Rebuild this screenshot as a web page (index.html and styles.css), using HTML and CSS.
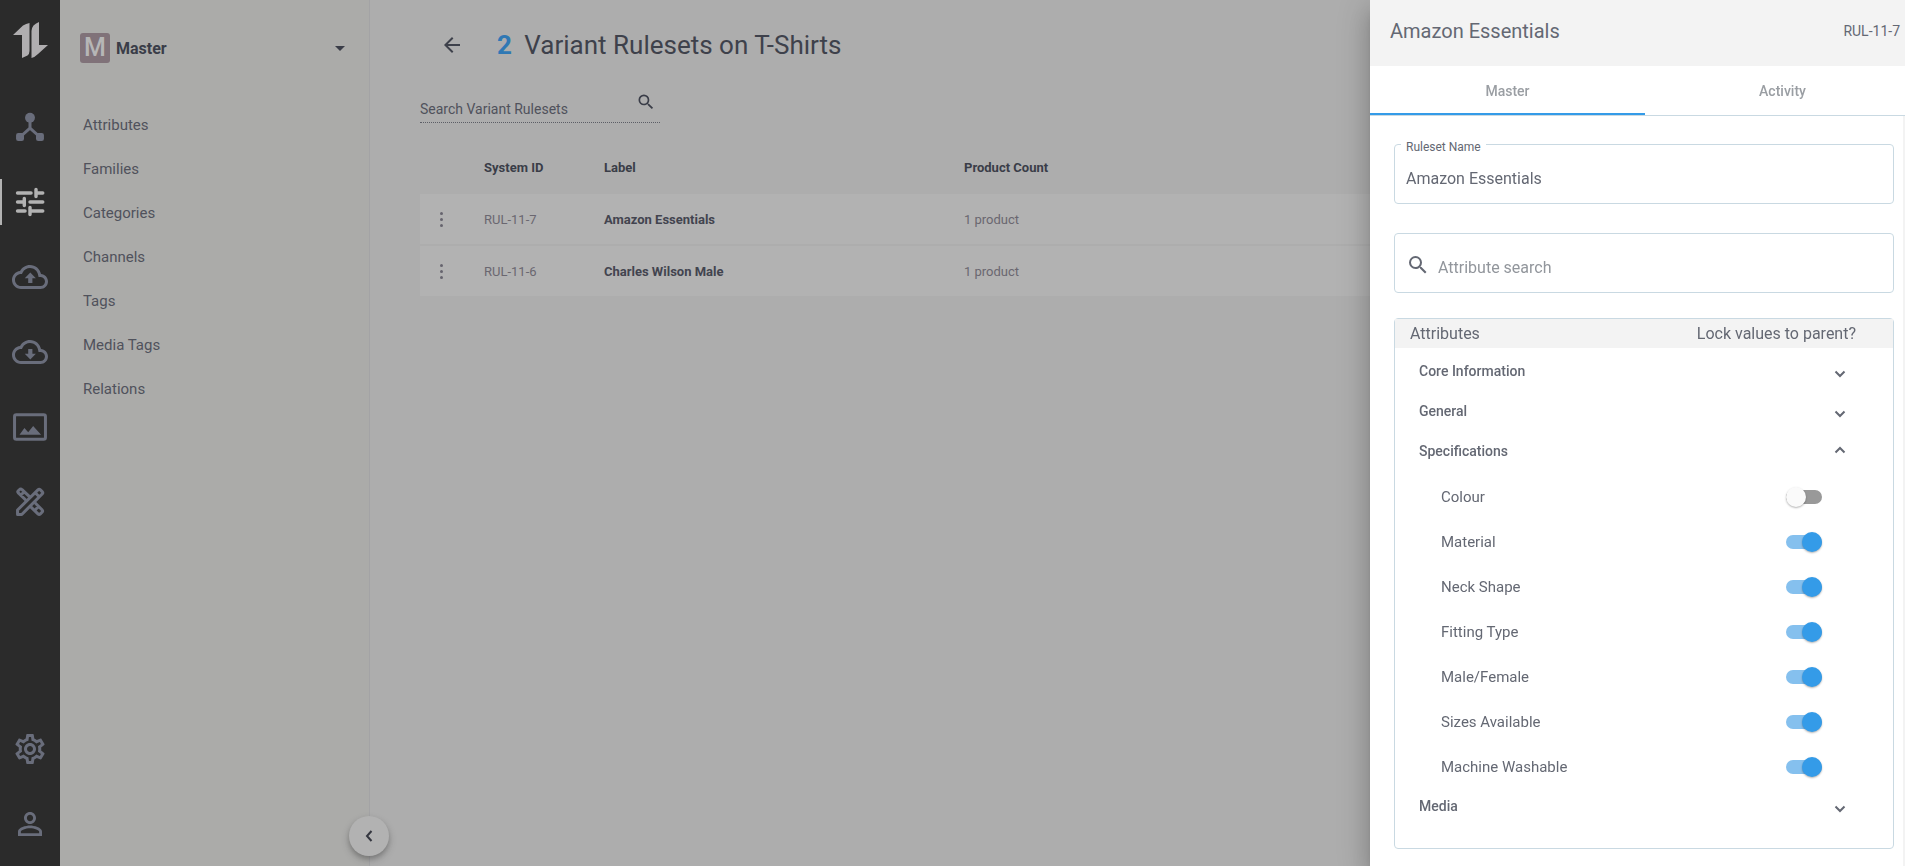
FILE: index.html
```html
<!DOCTYPE html>
<html lang="en">
<head>
    <meta charset="UTF-8">
    <meta name="viewport" content="width=device-width, initial-scale=1.0">
    <title>Variant Rulesets</title>
    <link rel="stylesheet" href="styles.css">
</head>
<body>
    <div class="app">
        <nav class="rail" aria-label="Main">
            <a class="rail-logo" href="#" aria-label="Home">
                <svg width="36" height="38" viewBox="0 0 36 38">
                    <path d="M16.500 1v28q0 3-2 4.500L9 36V13H0L10 3.500Q13 1.500 16.500 1z"/>
                    <path d="M26 0v23h9L25 32q-3 3-6.500 4V9q0-3 2-5.500Q23 1 26 0z"/>
                </svg>
            </a>
            <a class="rail-item" href="#" aria-label="Hierarchy">
                <svg width="36" height="36" viewBox="0 0 24 24">
                    <circle cx="12" cy="5.800" r="3.300"/>
                    <rect x="2.700" y="16" width="5.300" height="5.300" rx="1.500"/>
                    <rect x="16" y="16" width="5.300" height="5.300" rx="1.500"/>
                    <path class="line" d="M12 8v5.200M12 12.700L5.600 18.500M12 12.700l6.400 5.800"/>
                </svg>
            </a>
            <a class="rail-item active" href="#" aria-label="Setup">
                <svg width="36" height="36" viewBox="0 0 24 24">
                    <path class="line round" d="M3.700 6h9M16 3.700v4.600M16 6h4.500M3.700 12h4M8.200 9.700v4.600M12 12h8.500M3.700 18h5M12 15.700v4.600M12 18h8.500"/>
                </svg>
            </a>
            <a class="rail-item" href="#" aria-label="Import">
                <svg width="36" height="36" viewBox="0 0 24 24">
                    <path d="M19.350 10.040C18.670 6.590 15.640 4 12 4 9.110 4 6.600 5.640 5.350 8.040 2.340 8.360 0 10.910 0 14c0 3.310 2.690 6 6 6h13c2.760 0 5-2.240 5-5 0-2.640-2.050-4.780-4.650-4.960zM19 18H6c-2.210 0-4-1.790-4-4 0-2.050 1.530-3.760 3.560-3.970l1.070-.110.500-.950C8.080 7.140 9.940 6 12 6c2.620 0 4.880 1.860 5.390 4.430l.300 1.500 1.530.110c1.560.100 2.780 1.410 2.780 2.960 0 1.650-1.350 3-3 3z"/>
                    <path d="M8.500 12.800h2.300V16h2.800v-3.200h2.300L12.200 9z"/>
                </svg>
            </a>
            <a class="rail-item" href="#" aria-label="Export">
                <svg width="36" height="36" viewBox="0 0 24 24">
                    <path d="M19.350 10.040C18.670 6.590 15.640 4 12 4 9.110 4 6.600 5.640 5.350 8.040 2.340 8.360 0 10.910 0 14c0 3.310 2.690 6 6 6h13c2.760 0 5-2.240 5-5 0-2.640-2.050-4.780-4.650-4.960zM19 18H6c-2.210 0-4-1.790-4-4 0-2.050 1.530-3.760 3.560-3.970l1.070-.110.500-.950C8.080 7.140 9.940 6 12 6c2.620 0 4.880 1.860 5.390 4.430l.300 1.500 1.530.110c1.560.100 2.780 1.410 2.780 2.960 0 1.650-1.350 3-3 3z"/>
                    <path d="M8.500 13.200h2.300V10h2.800v3.200h2.300L12.200 17z"/>
                </svg>
            </a>
            <a class="rail-item" href="#" aria-label="Media">
                <svg width="36" height="36" viewBox="0 0 24 24">
                    <rect class="line" x="1.700" y="3.800" width="20.600" height="16.400" rx="1.200"/>
                    <path d="M5 17.200l3.300-4.500 2.500 2.800 3.300-4.200 5.300 5.900z"/>
                </svg>
            </a>
            <a class="rail-item" href="#" aria-label="Tools">
                <svg width="36" height="36" viewBox="0 0 24 24">
                    <path class="thin" d="M9.500 11L4.200 5.900Q3.500 5.200 4.200 4.500l.700-.700q.900-.900 1.800 0L12 8.800M5.800 7.500l2.200-2.200M14.800 12l5.200 5.200q.800.800 0 1.600l-1.100 1.100q-.800.800-1.600 0L12 14.800M15.700 17l2.200-2.200"/>
                    <path class="thin" d="M3.700 20.300v-3L17.300 3.900q.800-.800 1.600 0l1.200 1.200q.800.800 0 1.600L6.500 20.300zM15.300 5.700l3 3"/>
                </svg>
            </a>
            <a class="rail-item rail-bottom" href="#" aria-label="Settings">
                <svg width="36" height="36" viewBox="0 0 24 24">
                    <path d="M19.430 12.980c.040-.320.070-.640.070-.980s-.030-.660-.070-.980l2.110-1.650c.190-.150.240-.420.120-.640l-2-3.460c-.090-.160-.260-.250-.440-.250-.060 0-.120.010-.170.030l-2.490 1c-.520-.400-1.080-.730-1.690-.980l-.380-2.650C14.460 2.180 14.250 2 14 2h-4c-.250 0-.460.180-.490.420l-.380 2.650c-.610.250-1.170.590-1.690.980l-2.490-1c-.060-.020-.120-.030-.180-.030-.170 0-.340.090-.430.250l-2 3.460c-.130.220-.070.490.120.640l2.110 1.650c-.040.320-.070.650-.070.980s.030.660.070.980l-2.110 1.650c-.190.150-.240.420-.120.640l2 3.460c.090.160.260.250.440.250.060 0 .120-.010.170-.030l2.490-1c.520.400 1.080.730 1.690.980l.380 2.650c.030.240.240.420.490.420h4c.250 0 .460-.180.490-.420l.380-2.650c.610-.250 1.170-.590 1.690-.980l2.490 1c.060.020.120.030.180.030.170 0 .340-.090.430-.250l2-3.460c.120-.220.070-.490-.120-.640l-2.110-1.650zm-1.980-1.710c.040.310.050.520.050.730s-.020.430-.050.730l-.140 1.130.890.700 1.080.840-.700 1.210-1.270-.510-1.040-.420-.900.680c-.430.320-.840.560-1.250.730l-1.060.430-.160 1.130-.200 1.350h-1.400l-.190-1.350-.160-1.130-1.060-.430c-.430-.180-.830-.410-1.230-.710l-.910-.700-1.060.430-1.270.510-.700-1.210 1.080-.840.890-.700-.140-1.130c-.030-.310-.050-.540-.050-.740s.020-.430.050-.730l.140-1.130-.890-.700-1.080-.840.700-1.210 1.270.510 1.040.420.900-.680c.430-.320.840-.560 1.250-.730l1.060-.430.160-1.130.200-1.350h1.390l.190 1.350.160 1.130 1.060.430c.430.180.830.410 1.230.710l.910.700 1.060-.430 1.270-.510.700 1.210-1.070.850-.890.700.140 1.130zM12 8c-2.210 0-4 1.790-4 4s1.790 4 4 4 4-1.790 4-4-1.790-4-4-4zm0 6c-1.100 0-2-.900-2-2s.900-2 2-2 2 .900 2 2-.900 2-2 2z"/>
                </svg>
            </a>
            <a class="rail-item" href="#" aria-label="Account">
                <svg width="36" height="36" viewBox="0 0 24 24">
                    <path d="M12 5.900c1.160 0 2.100.940 2.100 2.100s-.940 2.100-2.100 2.100S9.900 9.160 9.900 8s.940-2.100 2.100-2.100m0 9c2.970 0 6.100 1.460 6.100 2.100v1.100H5.900V17c0-.640 3.130-2.100 6.100-2.100M12 4C9.790 4 8 5.790 8 8s1.790 4 4 4 4-1.790 4-4-1.790-4-4-4zm0 9c-2.670 0-8 1.340-8 4v3h16v-3c0-2.660-5.330-4-8-4z"/>
                </svg>
            </a>
        </nav>

        <aside class="sidebar">
            <button class="workspace" type="button">
                <span class="avatar">M</span>
                <span class="workspace-name">Master</span>
                <svg width="10" height="5" viewBox="0 0 10 5"><path d="M0 0h10L5 5z"/></svg>
            </button>
            <ul class="menu">
                <li><a href="#">Attributes</a></li>
                <li><a href="#">Families</a></li>
                <li><a href="#">Categories</a></li>
                <li><a href="#">Channels</a></li>
                <li><a href="#">Tags</a></li>
                <li><a href="#">Media Tags</a></li>
                <li><a href="#">Relations</a></li>
            </ul>
            <button class="collapse" type="button" aria-label="Collapse sidebar">
                <svg width="8" height="12" viewBox="0 0 8 12"><path d="M6.500 1L2 6l4.500 5"/></svg>
            </button>
        </aside>

        <main class="main">
            <header class="page-header">
                <button class="back" type="button" aria-label="Back">
                    <svg width="24" height="24" viewBox="0 0 24 24"><path d="M20 11H7.830l5.590-5.590L12 4l-8 8 8 8 1.410-1.410L7.830 13H20z"/></svg>
                </button>
                <h1><span class="count">2</span> Variant Rulesets on T-Shirts</h1>
            </header>

            <div class="search">
                <input type="text" placeholder="Search Variant Rulesets" aria-label="Search Variant Rulesets">
                <svg width="20" height="20" viewBox="0 0 24 24"><path d="M15.500 14h-.790l-.280-.270A6.470 6.470 0 0 0 16 9.500 6.500 6.500 0 1 0 9.500 16c1.610 0 3.090-.590 4.230-1.570l.270.280v.790l5 4.990L20.490 19l-4.990-5zm-6 0C7.010 14 5 11.990 5 9.500S7.010 5 9.500 5 14 7.010 14 9.500 11.990 14 9.500 14z"/></svg>
            </div>

            <table class="rulesets">
                <thead>
                    <tr>
                        <th class="col-menu"></th>
                        <th class="col-id">System ID</th>
                        <th class="col-label">Label</th>
                        <th>Product Count</th>
                    </tr>
                </thead>
                <tbody>
                    <tr>
                        <td><button class="kebab" type="button" aria-label="Row actions"><i></i><i></i><i></i></button></td>
                        <td>RUL-11-7</td>
                        <td class="name">Amazon Essentials</td>
                        <td>1 product</td>
                    </tr>
                    <tr>
                        <td><button class="kebab" type="button" aria-label="Row actions"><i></i><i></i><i></i></button></td>
                        <td>RUL-11-6</td>
                        <td class="name">Charles Wilson Male</td>
                        <td>1 product</td>
                    </tr>
                </tbody>
            </table>
        </main>
    </div>

    <section class="drawer">
        <header class="drawer-header">
            <h2>Amazon Essentials</h2>
            <span>RUL-11-7</span>
        </header>
        <div class="tabs">
            <button class="tab selected" type="button">Master</button>
            <button class="tab" type="button">Activity</button>
        </div>
        <div class="drawer-body">
            <div class="field">
                <label for="ruleset-name">Ruleset Name</label>
                <input id="ruleset-name" type="text" value="Amazon Essentials">
            </div>
            <div class="field">
                <svg width="24" height="24" viewBox="0 0 24 24"><path d="M15.500 14h-.790l-.280-.270A6.470 6.470 0 0 0 16 9.500 6.500 6.500 0 1 0 9.500 16c1.610 0 3.090-.590 4.230-1.570l.270.280v.790l5 4.990L20.490 19l-4.990-5zm-6 0C7.010 14 5 11.990 5 9.500S7.010 5 9.500 5 14 7.010 14 9.500 11.990 14 9.500 14z"/></svg>
                <input type="text" placeholder="Attribute search" aria-label="Attribute search">
            </div>

            <div class="attributes">
                <div class="attributes-head">
                    <span>Attributes</span>
                    <span>Lock values to parent?</span>
                </div>
                <div class="groups">
                    <button class="group" type="button">Core Information
                        <svg width="24" height="24" viewBox="0 0 24 24"><path d="M7.500 11.500L12 16l4.500-4.500"/></svg>
                    </button>
                    <button class="group" type="button">General
                        <svg width="24" height="24" viewBox="0 0 24 24"><path d="M7.500 11.500L12 16l4.500-4.500"/></svg>
                    </button>
                    <button class="group open" type="button">Specifications
                        <svg width="24" height="24" viewBox="0 0 24 24"><path d="M7.500 11.500L12 16l4.500-4.500"/></svg>
                    </button>
                    <label class="lock">Colour <input type="checkbox"></label>
                    <label class="lock">Material <input type="checkbox" checked></label>
                    <label class="lock">Neck Shape <input type="checkbox" checked></label>
                    <label class="lock">Fitting Type <input type="checkbox" checked></label>
                    <label class="lock">Male/Female <input type="checkbox" checked></label>
                    <label class="lock">Sizes Available <input type="checkbox" checked></label>
                    <label class="lock">Machine Washable <input type="checkbox" checked></label>
                    <button class="group" type="button">Media
                        <svg width="24" height="24" viewBox="0 0 24 24"><path d="M7.500 11.500L12 16l4.500-4.500"/></svg>
                    </button>
                </div>
            </div>
        </div>
    </section>
</body>
</html>
```
FILE: styles.css
```css
* {
    box-sizing: border-box;
}
body {
    margin: 0;
    font-family: Roboto, Arial, sans-serif;
    font-size: 14px;
    color: #50525c;
    background: #adadad;
    overflow: hidden;
}
button, input {
    font: inherit;
    color: inherit;
    background: none;
    border: none;
    padding: 0;
    outline: none;
}
button {
    cursor: pointer;
}
a {
    color: inherit;
    text-decoration: none;
}
svg {
    display: block;
    flex: none;
    fill: currentColor;
}
.app {
    display: flex;
    height: 100vh;
}

/* icon rail */
.rail {
    width: 60px;
    flex: none;
    display: flex;
    flex-direction: column;
    padding-bottom: 5px;
    background: #2b2b2b;
    color: #696d7b;
}
.rail-logo {
    height: 89px;
    padding: 22px 0 0 13px;
    color: #b0aeb0;
}
.rail-item {
    height: 75px;
    display: flex;
    align-items: center;
    justify-content: center;
}
.rail-item.active {
    color: #b2b2b2;
    background: linear-gradient(#b2b2b2, #b2b2b2) left center / 2px 46px no-repeat;
}
.rail-bottom {
    margin-top: auto;
}
.line, .thin {
    fill: none;
    stroke: currentColor;
    stroke-width: 2;
}
.thin {
    stroke-width: 2;
    stroke-linejoin: round;
}
.round {
    stroke-width: 2.3;
    stroke-linecap: round;
}

/* sidebar */
.sidebar {
    position: relative;
    width: 310px;
    flex: none;
    padding: 33px 0;
    background: #ababa9;
    border-right: 1px solid #a3a3a5;
}
.workspace {
    display: flex;
    align-items: center;
    width: 100%;
    padding: 0 24px 0 20px;
    color: #3a3d48;
    font-size: 16px;
    font-weight: 700;
}
.avatar {
    width: 30px;
    height: 30px;
    margin-right: 6px;
    border-radius: 3px;
    background: #807279;
    color: #b6b6b6;
    font-size: 25px;
    font-weight: 500;
    line-height: 30px;
    text-align: center;
}
.workspace-name {
    flex: 1;
    text-align: left;
}
.menu {
    list-style: none;
    margin: 40px 0 0;
    padding: 0 0 0 23px;
    font-size: 15px;
}
.menu li {
    line-height: 44px;
}
.collapse {
    position: absolute;
    right: -20px;
    bottom: 10px;
    width: 40px;
    height: 40px;
    display: flex;
    align-items: center;
    justify-content: center;
    border-radius: 50%;
    background: #b2b2b2;
    color: #34363f;
    box-shadow: 0 3px 5px rgba(0, 0, 0, 0.2), 0 4px 10px rgba(0, 0, 0, 0.14);
}
.collapse path {
    fill: none;
    stroke: currentColor;
    stroke-width: 2;
}

/* rulesets page */
.main {
    flex: 1;
    padding-left: 50px;
}
.page-header {
    display: flex;
    align-items: center;
    height: 91px;
    padding: 0 0 1px 20px;
    color: #3e414b;
}
h1 {
    margin: 0 0 0 33px;
    font-size: 26px;
    font-weight: 400;
}
.count {
    margin-right: 6px;
    color: #2f78b4;
    font-weight: 700;
}
.search {
    display: flex;
    width: 240px;
    height: 32px;
    margin-bottom: 17px;
    padding-right: 4px;
    border-bottom: 1px dotted #5c5e66;
}
.search input {
    flex: 1;
    min-width: 0;
    padding-top: 4px;
}
.search svg {
    margin-top: 1px;
    color: #3a3d48;
}
input::placeholder {
    color: inherit;
    opacity: 1;
}
.rulesets {
    width: 100%;
    table-layout: fixed;
    border-spacing: 0 2px;
    font-size: 13px;
    color: #6a6770;
}
.rulesets th, .rulesets td {
    height: 50px;
    padding: 0;
    text-align: left;
}
.rulesets th {
    color: #3a3d48;
    font-weight: 700;
}
.rulesets td {
    background: #b2b2b2;
}
.rulesets .name {
    color: #42444f;
    font-weight: 700;
}
.col-menu {
    width: 64px;
}
.col-id {
    width: 120px;
}
.col-label {
    width: 360px;
}
.kebab {
    display: flex;
    flex-direction: column;
    gap: 3px;
    padding: 0 20px;
}
.kebab i {
    width: 3px;
    height: 3px;
    border-radius: 50%;
    background: #66646e;
}

/* ruleset drawer */
.drawer {
    position: fixed;
    top: 0;
    right: 0;
    bottom: 0;
    width: 535px;
    display: flex;
    flex-direction: column;
    background: #fff;
    color: #646873;
    font-size: 16px;
    box-shadow: 0 8px 10px -5px rgba(0, 0, 0, 0.2), 0 16px 24px 2px rgba(0, 0, 0, 0.14), 0 6px 30px 5px rgba(0, 0, 0, 0.12);
}
.drawer-header {
    display: flex;
    align-items: center;
    justify-content: space-between;
    height: 67px;
    padding: 0 5px 4px 20px;
    background: #f3f3f3;
    font-size: 14px;
}
h2 {
    margin: 0;
    font-size: 20px;
    font-weight: 400;
}
.tabs {
    display: flex;
    height: 50px;
    overflow: hidden;
    border-bottom: 1px solid #c9d9e2;
}
.tab {
    flex: 0 0 275px;
    padding-top: 3px;
    border-bottom: 2px solid transparent;
    color: #9a9ea3;
    font-size: 14px;
    font-weight: 500;
}
.tab.selected {
    border-color: #349be8;
}
.drawer-body {
    flex: 1;
    padding: 28px 9px 17px 24px;
    border-right: 2px solid #f3f3f3;
}
.field {
    position: relative;
    display: flex;
    height: 60px;
    margin-bottom: 29px;
    padding: 0 12px 0 11px;
    border: 1px solid #c9d9e2;
    border-radius: 4px;
}
.field label {
    position: absolute;
    top: -5px;
    left: 6px;
    padding: 0 5px;
    background: #fff;
    font-size: 12px;
    line-height: 14px;
}
.field input {
    flex: 1;
    min-width: 0;
    padding-top: 9px;
}
.field svg {
    margin: 19px 8px 0 0;
}
.field input::placeholder {
    color: #92969c;
}
.attributes {
    margin-top: -4px;
    border: 1px solid #c9d9e2;
    border-radius: 4px;
}
.attributes-head {
    display: flex;
    justify-content: space-between;
    padding: 0 37px 0 15px;
    background: #f3f3f3;
    line-height: 29px;
}
.groups {
    padding: 6px 41px 19px 24px;
}
.group {
    display: flex;
    align-items: center;
    justify-content: space-between;
    width: 100%;
    height: 34px;
    margin-bottom: 6px;
    font-size: 14px;
    font-weight: 500;
}
.group svg {
    position: relative;
    top: 1px;
}
.group path {
    fill: none;
    stroke: currentColor;
    stroke-width: 2;
}
.group.open svg {
    transform: rotate(180deg);
}
.lock {
    display: flex;
    align-items: center;
    justify-content: space-between;
    height: 45px;
    padding: 0 30px 0 22px;
    font-size: 15px;
}
.lock input {
    position: relative;
    appearance: none;
    width: 36px;
    height: 14px;
    margin: 0;
    border-radius: 7px;
    background: #999;
    cursor: pointer;
}
.lock input::after {
    content: "";
    position: absolute;
    top: -3px;
    left: 0;
    width: 20px;
    height: 20px;
    border-radius: 50%;
    background: #fafafa;
    box-shadow: 0 1px 2px rgba(0, 0, 0, 0.3);
}
.lock input:checked {
    background: #85c0ee;
}
.lock input:checked::after {
    left: 16px;
    background: #349be8;
}
```
